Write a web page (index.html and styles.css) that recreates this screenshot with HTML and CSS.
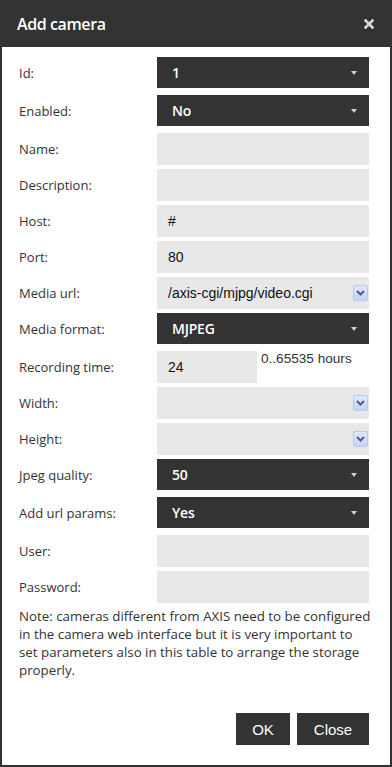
FILE: index.html
```html
<!DOCTYPE html>
<html>
<head>
<meta charset="utf-8">
<link rel="stylesheet" href="styles.css">
</head>
<body>
<div class="dialog">
  <div class="header">
    <span class="title">Add camera</span>
    <svg class="close" width="10" height="10" viewBox="0 0 10 10"><path d="M1.5 1.5 L8.5 8.5 M8.5 1.5 L1.5 8.5" stroke="#d9d9d9" stroke-width="2.6" stroke-linecap="square"/></svg>
  </div>
  <div class="content">
    <div class="row sel"><label>Id:</label><div class="dark">1<span class="caret"></span></div></div>
    <div class="row sel"><label>Enabled:</label><div class="dark">No<span class="caret"></span></div></div>
    <div class="row"><label>Name:</label><div class="input"></div></div>
    <div class="row"><label>Description:</label><div class="input"></div></div>
    <div class="row"><label>Host:</label><div class="input">#</div></div>
    <div class="row"><label>Port:</label><div class="input">80</div></div>
    <div class="row"><label>Media url:</label><div class="input">/axis-cgi/mjpg/video.cgi<span class="dd"><svg width="9" height="6" viewBox="0 0 9 6"><path d="M1 1 L4.5 4.5 L8 1" fill="none" stroke="#4d6185" stroke-width="2"/></svg></span></div></div>
    <div class="row sel"><label>Media format:</label><div class="dark">MJPEG<span class="caret"></span></div></div>
    <div class="row"><label>Recording time:</label><div class="input short">24</div><span class="hint">0..65535 hours</span></div>
    <div class="row"><label>Width:</label><div class="input"><span class="dd"><svg width="9" height="6" viewBox="0 0 9 6"><path d="M1 1 L4.5 4.5 L8 1" fill="none" stroke="#4d6185" stroke-width="2"/></svg></span></div></div>
    <div class="row"><label>Height:</label><div class="input"><span class="dd"><svg width="9" height="6" viewBox="0 0 9 6"><path d="M1 1 L4.5 4.5 L8 1" fill="none" stroke="#4d6185" stroke-width="2"/></svg></span></div></div>
    <div class="row sel"><label>Jpeg quality:</label><div class="dark">50<span class="caret"></span></div></div>
    <div class="row sel"><label>Add url params:</label><div class="dark">Yes<span class="caret"></span></div></div>
    <div class="row"><label>User:</label><div class="input"></div></div>
    <div class="row"><label>Password:</label><div class="input"></div></div>
    <p class="note">Note: cameras different from AXIS need to be configured in the camera web interface but it is very important to set parameters also in this table to arrange the storage properly.</p>
    <div class="buttons">
      <button class="btn ok">OK</button>
      <button class="btn close-btn">Close</button>
    </div>
  </div>
</div>
</body>
</html>
```
FILE: styles.css
```css
html, body {
  margin: 0;
  padding: 0;
  background: #fff;
}
.dialog {
  width: 392px;
  height: 767px;
  box-sizing: border-box;
  border: 2px solid #333;
  border-top: none;
  display: flex;
  flex-direction: column;
  font-family: "Open Sans", "Noto Sans", sans-serif;
}
.header {
  height: 47px;
  background: #333;
  margin: 0 -2px;
  padding: 0 17px 0 17px;
  display: flex;
  align-items: center;
  justify-content: space-between;
}
.title {
  color: #fff;
  font-weight: 600;
  font-size: 16px;
  letter-spacing: -0.4px;
}
.close {
  margin-right: 1px;
}
.content {
  padding: 10px 21px 0 17px;
  display: flex;
  flex-direction: column;
  flex: 1;
}
.row {
  display: flex;
  align-items: center;
  margin-bottom: 4px;
}
.row.sel {
  margin-bottom: 7px;
}
.row label {
  width: 138px;
  font-size: 13px;
  color: #333;
}
.dark {
  width: 212px;
  height: 31px;
  background: #333;
  color: #fff;
  font-weight: 600;
  font-size: 14px;
  letter-spacing: -0.2px;
  box-sizing: border-box;
  padding-left: 15px;
  display: flex;
  align-items: center;
  position: relative;
}
.caret {
  position: absolute;
  right: 12px;
  top: 14px;
  width: 0;
  height: 0;
  border-left: 3.5px solid transparent;
  border-right: 3.5px solid transparent;
  border-top: 4px solid #cfcfcf;
}
.input {
  width: 212px;
  height: 32px;
  background: #e8e8e8;
  box-sizing: border-box;
  padding-left: 11px;
  display: flex;
  align-items: center;
  font-family: "Liberation Sans", Arial, sans-serif;
  font-size: 14px;
  color: #111;
  position: relative;
}
.input.short {
  width: 100px;
}
.hint {
  align-self: flex-start;
  margin-left: 4px;
  margin-top: 0;
  font-family: "Liberation Sans", Arial, sans-serif;
  font-size: 13.6px;
  color: #333;
}
.dd {
  position: absolute;
  right: 1px;
  top: 8px;
  width: 15px;
  height: 16px;
  box-sizing: border-box;
  border: 1px solid #b9c8ee;
  border-radius: 2px;
  background: linear-gradient(#e0e8fb, #c5d3f5);
  display: flex;
  align-items: center;
  justify-content: center;
}
.note {
  margin: 0 -4px 0 0;
  font-size: 13.3px;
  line-height: 18px;
  color: #333;
}
.buttons {
  display: flex;
  justify-content: flex-end;
  gap: 7px;
  margin-top: 34px;
}
.btn {
  height: 32px;
  background: #333;
  color: #fff;
  border: none;
  font-family: "Liberation Sans", Arial, sans-serif;
  font-size: 15px;
  padding: 0;
}
.ok {
  width: 54px;
}
.close-btn {
  width: 72px;
}
```
